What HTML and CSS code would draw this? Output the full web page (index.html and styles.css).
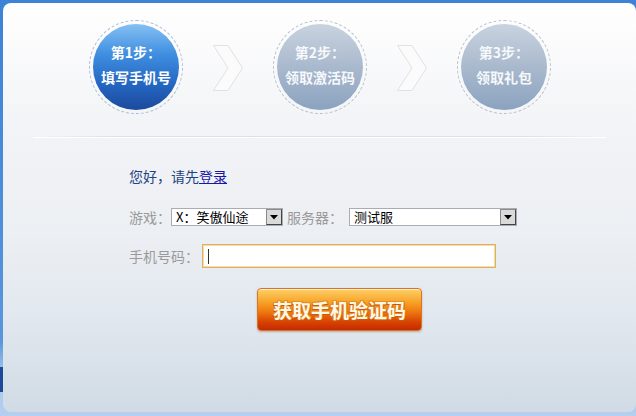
FILE: index.html
```html
<!DOCTYPE html>
<html lang="zh-CN">
  <head>
    <meta charset="UTF-8" />
    <title>领取礼包</title>
    <link rel="stylesheet" href="styles.css">
  </head>
  <body>
    <div class="panel">
      <!-- 步骤 -->
      <div class="steps">
        <div class="step active">
          <div class="step-inner">
            <span>第1步：</span>
            <span>填写手机号</span>
          </div>
        </div>
        <svg class="arrow" width="30" height="46" viewBox="0 0 30 46">
          <polygon points="0.5,0.5 15,0.5 29.5,23 15,45.5 0.5,45.5 15,23" fill="#fbfbfc" stroke="#dfe1e5" />
        </svg>
        <div class="step">
          <div class="step-inner">
            <span>第2步：</span>
            <span>领取激活码</span>
          </div>
        </div>
        <svg class="arrow" width="30" height="46" viewBox="0 0 30 46">
          <polygon points="0.5,0.5 15,0.5 29.5,23 15,45.5 0.5,45.5 15,23" fill="#fbfbfc" stroke="#dfe1e5" />
        </svg>
        <div class="step">
          <div class="step-inner">
            <span>第3步：</span>
            <span>领取礼包</span>
          </div>
        </div>
      </div>

      <div class="divider"></div>

      <form class="form">
        <div class="row greet">您好，请先<a href="#">登录</a></div>
        <div class="row">
          <span class="label">游戏：</span>
          <div class="select game">
            <span class="select-text">X：笑傲仙途</span>
            <span class="select-btn">
              <svg width="8" height="5" viewBox="0 0 8 5"><polygon points="0,0 8,0 4,4.5" fill="#000" /></svg>
            </span>
          </div>
          <span class="label gap">服务器：</span>
          <div class="select server">
            <span class="select-text">测试服</span>
            <span class="select-btn">
              <svg width="8" height="5" viewBox="0 0 8 5"><polygon points="0,0 8,0 4,4.5" fill="#000" /></svg>
            </span>
          </div>
        </div>
        <div class="row phone">
          <span class="label">手机号码：</span>
          <div class="input"><span class="caret"></span></div>
        </div>
        <button type="button" class="btn-code">获取手机验证码</button>
      </form>
    </div>
  </body>
</html>
```

FILE: styles.css
```css
html,
body {
  margin: 0;
  width: 636px;
  height: 416px;
  overflow: hidden;
}
body {
  font-family: "Noto Sans CJK SC", "Liberation Sans", sans-serif;
  background:
    linear-gradient(to bottom, transparent 367px, #1d4a98 367px, #1d4a98 392px, transparent 392px) left top / 3px 100% no-repeat,
    linear-gradient(to bottom, #3c82d6 0%, #5996dc 82%, #a9c8ec 90%, #b4cff0 100%);
}
.panel {
  margin: 3px 0 0 3px;
  height: 409px;
  border-radius: 8px;
  background: linear-gradient(to bottom, #ffffff 0, #f2f3f6 130px, #eceff3 230px, #e2e8ef 310px, #d0dbe5 100%);
  box-sizing: border-box;
  padding-top: 17px;
}
/* 步骤 */
.steps {
  display: flex;
  align-items: center;
  gap: 30px;
  padding-left: 86px;
  height: 94px;
}
.arrow {
  display: block;
  margin-top: 2px;
}
.step {
  width: 94px;
  height: 94px;
  box-sizing: border-box;
  border: 1px dashed #b7bfca;
  border-radius: 50%;
  padding: 3px;
}
.step.active {
  border-color: #a9bcd8;
}
.step-inner {
  width: 86px;
  height: 86px;
  border-radius: 50%;
  background: linear-gradient(to bottom, #c9d3e0 0%, #a9b9cd 50%, #8ba3c0 100%);
  display: flex;
  flex-direction: column;
  align-items: center;
  justify-content: center;
  padding-bottom: 4px;
  box-sizing: border-box;
  color: #f6f8fb;
  font-size: 14px;
  font-weight: bold;
  line-height: 25px;
}
.step.active .step-inner {
  background: linear-gradient(to bottom, #86c0f3 0%, #3f8fe0 35%, #2466c2 70%, #1b4a9c 100%);
  color: #fff;
}
.divider {
  margin: 22px 30px 0;
  height: 1px;
  background: linear-gradient(to right, transparent, #dddfe2 15%, #dddfe2 85%, transparent);
  border-bottom: 1px solid #fff;
}
/* 表单 */
.form {
  padding: 28px 0 0 126px;
}
.row {
  display: flex;
  align-items: center;
  font-size: 14px;
  line-height: 20px;
  height: 20px;
}
.greet {
  color: #1c4682;
  margin-bottom: 21px;
}
.greet a {
  color: #1717a8;
}
.label {
  color: #9a9a9a;
}
.label.gap {
  margin: 0 6px 0 4px;
}
.select {
  height: 18px;
  box-sizing: border-box;
  border: 1px solid #a7adb5;
  background: #fff;
  display: flex;
  align-items: center;
  justify-content: space-between;
  overflow: hidden;
}
.select.game {
  width: 112px;
}
.select.server {
  width: 168px;
}
.select-text {
  padding-left: 4px;
  color: #000;
  font-size: 13px;
  line-height: 16px;
  height: 16px;
}
.select-btn {
  width: 16px;
  height: 16px;
  box-sizing: border-box;
  border: 1px solid;
  border-color: #8b8b8b #444 #444 #8b8b8b;
  background: #dadada;
  display: flex;
  align-items: center;
  justify-content: center;
}
.select-btn svg {
  display: block;
}
.phone {
  margin-top: 17px;
  height: 24px;
}
.phone .label {
  margin-right: 3px;
}
.input {
  width: 294px;
  height: 24px;
  box-sizing: border-box;
  border: 1px solid #dfb15a;
  box-shadow: inset 0 0 0 1px #f3dcab;
  background: #fff;
  padding: 4px 0 0 5px;
}
.caret {
  display: block;
  width: 1px;
  height: 15px;
  background: #333;
}
.btn-code {
  display: block;
  margin: 20px 0 0 128px;
  width: 165px;
  height: 43px;
  border: 1px solid #d8732a;
  border-radius: 4px;
  background: linear-gradient(to bottom, #fdd16a 0%, #f7a62a 30%, #ef7a10 55%, #d84400 80%, #c42a00 100%);
  box-shadow: 0 1px 2px rgba(120, 60, 20, 0.35), inset 0 1px 0 #fff0c8;
  font-family: "Noto Sans CJK SC", sans-serif;
  font-size: 19px;
  font-weight: bold;
  color: #fff8e6;
  letter-spacing: 0;
  padding: 0;
  line-height: 41px;
  text-shadow: 1px 0 0 #e07a16, -1px 0 0 #e07a16, 0 1px 0 #c85a10, 0 -1px 0 #e8901e, 1px 1px 0 #c85a10, -1px -1px 0 #e8901e, 1px -1px 0 #e8901e, -1px 1px 0 #c85a10;
  cursor: pointer;
}
```
